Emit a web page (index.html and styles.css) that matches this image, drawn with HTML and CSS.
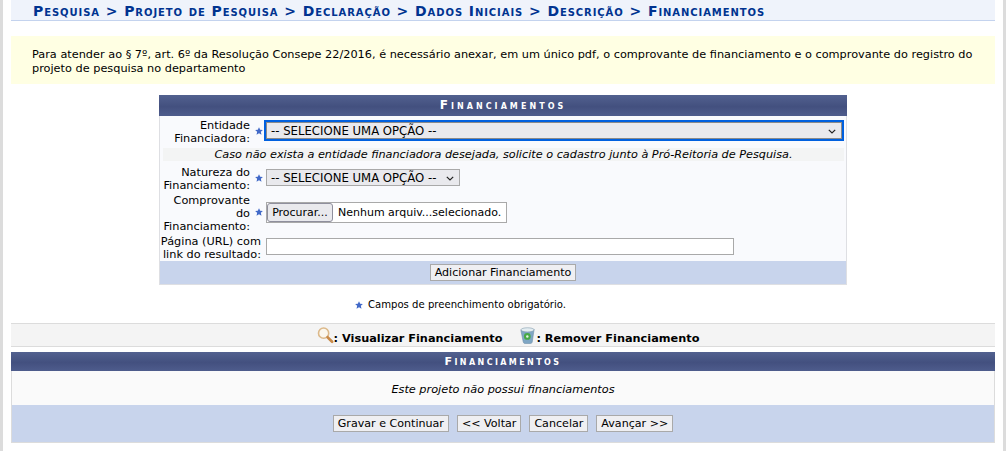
FILE: index.html
```html
<!DOCTYPE html>
<html lang="pt-BR">
<head>
<meta charset="utf-8">
<title>Financiamentos</title>
<link rel="stylesheet" href="styles.css">
</head>
<body>
<div class="page">
  <h2 class="crumb">Pesquisa &gt; Projeto de Pesquisa &gt; Declaração &gt; Dados Iniciais &gt; Descrição &gt; Financiamentos</h2>
  <div class="notice">Para atender ao § 7º, art. 6º da Resolução Consepe 22/2016, é necessário anexar, em um único pdf, o comprovante de financiamento e o comprovante do registro do projeto de pesquisa no departamento</div>

  <form class="form-box">
    <div class="cap">Financiamentos</div>
    <div class="row row-first">
      <label class="lab lab-a">Entidade Financiadora:</label>
      <svg class="star" viewBox="0 0 10 10"><path d="M5 .2 6.5 3.4 9.9 3.7 7.3 6 8.1 9.6 5 7.7 1.9 9.6 2.7 6 .1 3.7 3.5 3.4Z"/></svg>
      <div class="sel sel-focus">-- SELECIONE UMA OPÇÃO --<svg class="chev" viewBox="0 0 8 5"><path d="M.8.8 4 4 7.2.8"/></svg></div>
    </div>
    <div class="hint">Caso não exista a entidade financiadora desejada, solicite o cadastro junto à Pró-Reitoria de Pesquisa.</div>
    <div class="row row-b">
      <label class="lab lab-a">Natureza do Financiamento:</label>
      <svg class="star" viewBox="0 0 10 10"><path d="M5 .2 6.5 3.4 9.9 3.7 7.3 6 8.1 9.6 5 7.7 1.9 9.6 2.7 6 .1 3.7 3.5 3.4Z"/></svg>
      <div class="sel sel-small">-- SELECIONE UMA OPÇÃO --<svg class="chev" viewBox="0 0 8 5"><path d="M.8.8 4 4 7.2.8"/></svg></div>
    </div>
    <div class="row row-c">
      <label class="lab lab-a">Comprovante<br>do<br>Financiamento:</label>
      <svg class="star star-c" viewBox="0 0 10 10"><path d="M5 .2 6.5 3.4 9.9 3.7 7.3 6 8.1 9.6 5 7.7 1.9 9.6 2.7 6 .1 3.7 3.5 3.4Z"/></svg>
      <div class="file"><span class="file-btn">Procurar...</span><span class="file-name">Nenhum arquiv...selecionado.</span></div>
    </div>
    <div class="row row-d">
      <label class="lab lab-d">Página (URL) com link do resultado:</label>
      <div class="url"></div>
    </div>
    <div class="form-foot"><button type="button" class="btn">Adicionar Financiamento</button></div>
  </form>

  <p class="required"><svg class="star" viewBox="0 0 10 10"><path d="M5 .2 6.5 3.4 9.9 3.7 7.3 6 8.1 9.6 5 7.7 1.9 9.6 2.7 6 .1 3.7 3.5 3.4Z"/></svg>Campos de preenchimento obrigatório.</p>

  <div class="legend">
    <svg class="ico" viewBox="0 0 18 18"><circle cx="7" cy="6.5" r="5.4" fill="#fbf7ee" stroke="#dcb98a" stroke-width="1.7"/><path d="M11.2 10.8 16 15.6" stroke="#c98a48" stroke-width="2.8" stroke-linecap="round"/></svg>
    <span class="leg-t">: Visualizar Financiamento</span>
    <svg class="ico ico-b" viewBox="0 0 18 18"><path d="M2 3.5 16 2.5 14 16a2 2 0 0 1-2 1.5H6.5A2 2 0 0 1 4.5 16Z" fill="#7fa6c4" stroke="#6a8ca6" stroke-width=".6"/><ellipse cx="9" cy="3" rx="7" ry="2.2" fill="#e4edf1" stroke="#7d99aa" stroke-width=".6"/><circle cx="8.8" cy="10" r="3.6" fill="#48a945"/><circle cx="8.8" cy="10" r="1.3" fill="#e4f5e0"/></svg>
    <span class="leg-t">: Remover Financiamento</span>
  </div>

  <div class="list-box">
    <div class="cap cap-sm">Financiamentos</div>
    <div class="empty">Este projeto não possui financiamentos</div>
    <div class="actions">
      <button type="button" class="btn">Gravar e Continuar</button>
      <button type="button" class="btn">&lt;&lt; Voltar</button>
      <button type="button" class="btn">Cancelar</button>
      <button type="button" class="btn">Avançar &gt;&gt;</button>
    </div>
  </div>
</div>
</body>
</html>
```
FILE: styles.css
```css
* { box-sizing: border-box; }
html, body { margin: 0; padding: 0; height: 451px; overflow: hidden; background: #fff; }
body { font-family: "DejaVu Sans", Verdana, sans-serif; font-size: 11.3px; color: #000; }
.page {
  height: 451px;
  padding: 0 8px;
  border-left: 3px solid #dcdcdc;
  border-right: 3px solid #dcdcdc;
}
.crumb {
  margin: 0;
  height: 21px;
  padding: 3px 0 0 22px;
  background: #eff3fb;
  border-bottom: 1px solid #c4d3ee;
  color: #003390;
  font-size: 14px;
  line-height: 16px;
  font-weight: bold;
  font-variant: small-caps;
  letter-spacing: .92px;
  white-space: nowrap;
}
.notice {
  margin-top: 15px;
  height: 48px;
  padding: 12px 20px 0 21px;
  background: #ffffe3;
  line-height: 14px;
}
.form-box {
  width: 688px;
  margin: 11px auto 0;
  border: 1px solid #dedfe3;
  border-top: 0;
  background: #f9fafd;
}
.cap {
  height: 21px;
  background: linear-gradient(#52618f, #43507f 55%, #4e5c8c);
  color: #fff;
  font-size: 12px;
  font-weight: bold;
  font-variant: small-caps;
  letter-spacing: 3.05px;
  text-align: center;
  line-height: 21px;
  margin: 0 -1px;
}
.cap-sm { height: 19px; line-height: 19px; font-size: 11px; letter-spacing: 2.4px; }
.row { display: flex; align-items: center; }
.row-first { height: 29px; }
.row-b { height: 33px; }
.row-c { height: 38px; }
.row-d { height: 29px; }
.lab { flex: none; text-align: right; line-height: 13px; }
.row-first .lab, .row-b .lab, .row-d .lab { padding-top: 2px; }
.lab-a { width: 90px; margin-right: 5px; }
.lab-d { width: 101px; margin-right: 5px; }
.star { flex: none; width: 8px; height: 8px; margin: 0 3px 0 0; fill: #4169c8; }
.star-c { margin-top: -2px; }
.sel {
  display: flex;
  align-items: center;
  background: #e9e9ed;
  padding-left: 4px;
  position: relative;
  white-space: nowrap;
  font-size: 11.7px;
}
.sel-focus { width: 576px; height: 17px; border: 1px solid #8a8a8a; outline: 2px solid #0060df; }
.sel-small { width: 194px; height: 17px; border: 1px solid #a9a9a9; }
.chev { position: absolute; right: 5px; top: 50%; width: 8px; height: 5px; margin-top: -2px; fill: none; stroke: #222; stroke-width: 1.2; }
.hint {
  margin: 3px 0 0 3px;
  width: 681px;
  height: 13px;
  line-height: 13px;
  background: #f3f4f4;
  font-style: italic;
  font-size: 11.25px;
  text-align: center;
}
.file { width: 241px; height: 21px; margin-top: -2px; display: flex; align-items: center; background: #fff; border: 1px solid #a9a9a9; white-space: nowrap; font-size: 11px; }
.file-btn { width: 66px; height: 19px; line-height: 17px; text-align: center; background: #e9e9ed; border: 1px solid #8f8f9d; border-radius: 3px; flex: none; }
.file-name { margin-left: 5px; }
.url { width: 468px; height: 17px; background: #fff; border: 1px solid #a9a9a9; }
.form-foot { height: 23px; background: #c8d4ec; display: flex; align-items: center; justify-content: center; }
.btn {
  font-family: inherit;
  font-size: 11.1px;
  height: 17px;
  padding: 0 4px;
  color: #000;
  background: #efeff2;
  border: 1px solid #a9a9a9;
  line-height: 15px;
}
.required { margin: 13px 0 0; height: 13px; font-size: 10.1px; line-height: 13px; display: flex; justify-content: center; align-items: center; padding-right: 85px; }
.required .star { margin-right: 5px; }
.legend {
  margin-top: 12px;
  height: 24px;
  background: #f4f4f4;
  border-top: 1px solid #dcdcdc;
  border-bottom: 1px solid #dcdcdc;
  display: flex;
  align-items: center;
  justify-content: center;
  font-weight: bold;
  padding: 7px 0 0 10px;
}
.ico { width: 17px; height: 17px; flex: none; margin-top: -7px; }
.ico-b { margin-left: 17px; }
.list-box { margin-top: 5px; border: 1px solid #dcdcdc; border-top: 0; height: 91px; background: #fafafa; }
.empty { height: 34px; padding-top: 9px; font-style: italic; text-align: center; line-height: 20px; }
.actions { height: 37px; background: #c8d4ec; display: flex; justify-content: center; align-items: center; gap: 8px; }
```
